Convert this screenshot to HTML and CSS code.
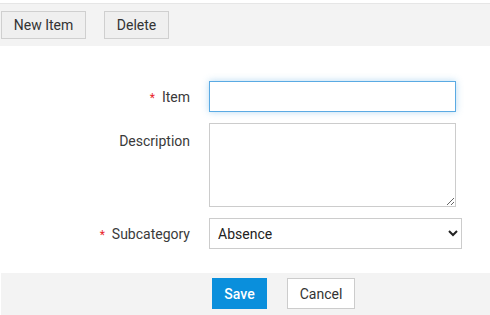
FILE: index.html
```html
<!DOCTYPE html>
<html lang="en">
<head>
    <meta charset="UTF-8">
    <meta name="viewport" content="width=device-width, initial-scale=1.0">
    <title>New Item</title>
    <link rel="stylesheet" href="styles.css">
</head>
<body>

    <div class="toolbar">
        <button type="button" class="tool-button">New Item</button>
        <button type="button" class="tool-button">Delete</button>
    </div>

    <form class="item-form" action="/save-item" method="POST">
        <div class="form-row">
            <label for="item" class="form-label"><span class="required">*</span>Item</label>
            <input type="text" id="item" name="item" class="form-input focused" autofocus>
        </div>

        <div class="form-row">
            <label for="description" class="form-label label-top">Description</label>
            <textarea id="description" name="description" class="form-textarea"></textarea>
        </div>

        <div class="form-row">
            <label for="subcategory" class="form-label"><span class="required">*</span>Subcategory</label>
            <select id="subcategory" name="subcategory" class="form-select">
                <option>Absence</option>
                <option>Late</option>
                <option>Overtime</option>
            </select>
        </div>
    </form>

    <div class="footer-bar">
        <button type="submit" class="save-button">Save</button>
        <button type="button" class="cancel-button">Cancel</button>
    </div>

</body>
</html>
```

FILE: styles.css
```css
body {
    font-family: Roboto, "Liberation Sans", Arial, sans-serif;
    font-size: 14px;
    color: #333;
    background-color: #fff;
    margin: 0;
    padding: 0;
}

button {
    font-family: inherit;
    font-size: 14px;
    cursor: pointer;
}

.toolbar {
    margin-top: 3px;
    height: 43px;
    box-sizing: border-box;
    border-top: 1px solid #e6e6e6;
    background-color: #f3f3f3;
    display: flex;
    align-items: flex-start;
    gap: 18px;
    padding: 7px 0 0 1px;
}

.tool-button {
    height: 28px;
    padding: 0;
    white-space: nowrap;
    color: #333;
    background-color: #efefef;
    border: 1px solid #cfcfcf;
    border-radius: 0;
}

.tool-button:first-child {
    width: 85px;
}

.tool-button:last-child {
    width: 65px;
}

.item-form {
    padding: 35px 0 24px 0;
    display: flex;
    flex-direction: column;
    gap: 11px;
}

.form-row {
    display: flex;
    align-items: center;
}

.form-label {
    width: 190px;
    flex-shrink: 0;
    text-align: right;
    margin-right: 19px;
    color: #3a3a3a;
}

.label-top {
    align-self: flex-start;
    padding-top: 10px;
}

.required {
    color: #e8262b;
    font-size: 12px;
    margin-right: 7px;
}

.form-input {
    width: 247px;
    height: 31px;
    box-sizing: border-box;
    padding: 0 6px;
    font-family: inherit;
    font-size: 14px;
    border: 1px solid #ccc;
    outline: none;
}

.form-input.focused {
    border-color: #5aaae3;
    box-shadow: 0 0 7px rgba(90, 170, 227, 0.45);
}

.form-textarea {
    width: 247px;
    height: 84px;
    box-sizing: border-box;
    padding: 6px;
    font-family: inherit;
    font-size: 14px;
    border: 1px solid #ccc;
    outline: none;
}

.form-select {
    width: 253px;
    height: 31px;
    box-sizing: border-box;
    padding: 0 4px;
    font-family: inherit;
    font-size: 14px;
    color: #222;
    background-color: #fff;
    border: 1px solid #ccc;
    border-radius: 0;
    outline: none;
}

.footer-bar {
    margin-left: 1px;
    height: 42px;
    background-color: #f3f3f3;
    display: flex;
    align-items: flex-start;
    gap: 20px;
    padding: 5px 0 0 211px;
    box-sizing: border-box;
}

.save-button {
    width: 55px;
    height: 31px;
    color: #fff;
    font-weight: 500;
    background-color: #0a8fdc;
    border: none;
    border-radius: 0;
}

.save-button:hover {
    background-color: #0780c6;
}

.cancel-button {
    width: 68px;
    height: 31px;
    color: #333;
    background-color: #fff;
    border: 1px solid #ccc;
    border-radius: 0;
}
```
